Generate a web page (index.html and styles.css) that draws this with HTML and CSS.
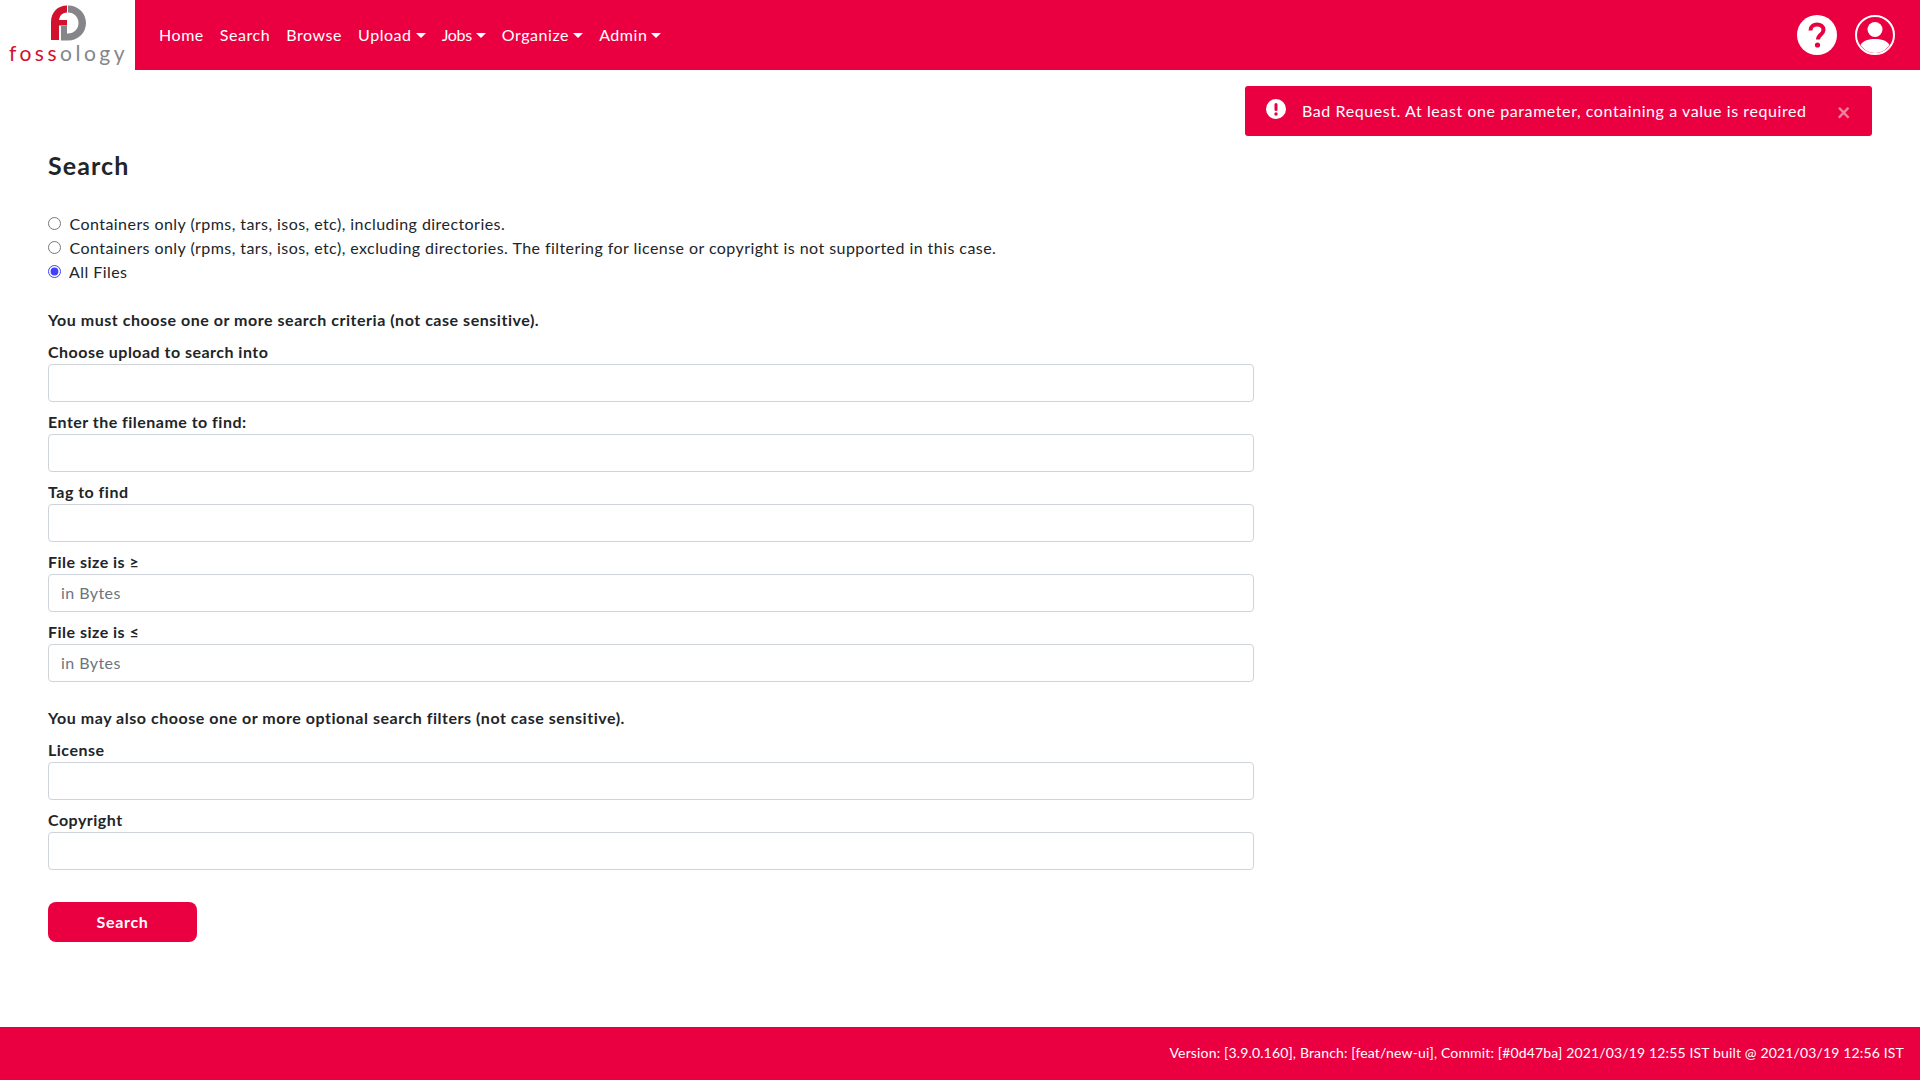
FILE: index.html

```html
<!DOCTYPE html>
<html lang="en">
<head>
  <meta charset="UTF-8">
  <title>Search</title>
  <link rel="stylesheet" href="styles.css">
</head>
<body>
  <nav class="navbar">
    <a class="brand" href="#">
      <svg class="brand-mark" width="36" height="36" viewBox="0 0 36 36">
        <path d="M0 35V17C0 7 7 .5 16 .5V7.500C11 7.500 8 11 8 17V35Z" fill="#d2112f"/>
        <rect x="7" y="15" width="9" height="5.500" fill="#d2112f"/>
        <path d="M17 .5C27 .5 35 8 35 18S27 35.500 17 35.500H10V28.500H17C23 28.500 27.500 24 27.500 18S23 7.500 17 7.500Z" fill="#85858a"/>
        <rect x="10" y="21" width="6" height="9" fill="#85858a"/>
      </svg>
      <span class="brand-name"><span class="brand-red">foss</span>ology</span>
    </a>
    <ul class="nav-list">
      <li><a href="#">Home</a></li>
      <li><a href="#">Search</a></li>
      <li><a href="#">Browse</a></li>
      <li><a class="caret" href="#">Upload</a></li>
      <li><a class="caret nav-tight" href="#">Jobs</a></li>
      <li><a class="caret" href="#">Organize</a></li>
      <li><a class="caret" href="#">Admin</a></li>
    </ul>
    <div class="nav-icons">
      <svg width="40" height="40" viewBox="0 0 40 40">
        <circle cx="20" cy="20" r="20" fill="#fff"/>
        <path d="M13.500 15.500C13.500 11.500 16.500 9.500 20 9.500S26.500 11.500 26.500 15C26.500 19.500 21 19.500 21 24.500" fill="none" stroke="#ea0040" stroke-width="4"/>
        <circle cx="20.500" cy="30" r="2.600" fill="#ea0040"/>
      </svg>
      <svg width="40" height="40" viewBox="0 0 40 40">
        <circle cx="20" cy="20" r="19" fill="none" stroke="#fff" stroke-width="2"/>
        <circle cx="20" cy="14.500" r="7.500" fill="#fff"/>
        <path d="M5.500 30C8 25.500 14 24 20 24S32 25.500 34.500 30C31 35 26 38 20 38S9 35 5.500 30Z" fill="#fff"/>
      </svg>
    </div>
  </nav>

  <div class="toast">
    <svg width="20" height="20" viewBox="0 0 20 20">
      <circle cx="10" cy="10" r="10" fill="#fff"/>
      <rect x="8.500" y="4" width="3" height="8" rx="1.500" fill="#ea0040"/>
      <circle cx="10" cy="15" r="1.700" fill="#ea0040"/>
    </svg>
    <span class="toast-text">Bad Request. At least one parameter, containing a value is required</span>
    <span class="toast-close">×</span>
  </div>

  <main class="content">
    <h1>Search</h1>
    <form class="search-form">
      <div class="radio-group">
        <label><input type="radio" name="scope"> Containers only (rpms, tars, isos, etc), including directories.</label>
        <label><input type="radio" name="scope"> Containers only (rpms, tars, isos, etc), excluding directories. The filtering for license or copyright is not supported in this case.</label>
        <label><input type="radio" name="scope" checked> All Files</label>
      </div>

      <p class="section-note">You must choose one or more search criteria (not case sensitive).</p>
      <div class="field"><label>Choose upload to search into</label><input type="text"></div>
      <div class="field"><label>Enter the filename to find:</label><input type="text"></div>
      <div class="field"><label>Tag to find</label><input type="text"></div>
      <div class="field"><label>File size is ≥</label><input type="text" placeholder="in Bytes"></div>
      <div class="field"><label>File size is ≤</label><input type="text" placeholder="in Bytes"></div>

      <p class="section-note">You may also choose one or more optional search filters (not case sensitive).</p>
      <div class="field"><label>License</label><input type="text"></div>
      <div class="field"><label>Copyright</label><input type="text"></div>

      <button class="search-btn" type="button">Search</button>
    </form>
  </main>

  <footer class="footer">Version: [3.9.0.160], Branch: [feat/new-ui], Commit: [#0d47ba] 2021/03/19 12:55 IST built @ 2021/03/19 12:56 IST</footer>
</body>
</html>
```

FILE: styles.css

```css
* { box-sizing: border-box; }
body {
  margin: 0;
  height: 1080px;
  display: flex;
  flex-direction: column;
  font-family: "Lato", "Noto Sans", sans-serif;
  font-size: 16px;
  line-height: 24px;
  letter-spacing: 0.44px;
  color: #212529;
  background: #fff;
  overflow: hidden;
}

/* navbar */
.navbar {
  display: flex;
  align-items: center;
  height: 70px;
  background: #ea0040;
  flex-shrink: 0;
}
.brand {
  width: 135px;
  height: 70px;
  background: #fff;
  display: flex;
  flex-direction: column;
  align-items: center;
  padding: 5px 0 0 2px;
  text-decoration: none;
}
.brand-mark { display: block; margin-left: 1px; }
.brand-name {
  font-size: 21px;
  line-height: 24px;
  letter-spacing: 3.5px;
  color: #85858a;
}
.brand-red { color: #d2112f; }
.nav-list {
  list-style: none;
  display: flex;
  gap: 16px;
  margin: 0;
  padding: 0 0 0 24px;
  letter-spacing: 0.55px;
}
.nav-list a { color: #fff; text-decoration: none; }
.nav-list .nav-tight { letter-spacing: -0.3px; }
.caret::after {
  content: "";
  display: inline-block;
  margin-left: 4px;
  vertical-align: 3px;
  border-top: 5px solid #fff;
  border-left: 5px solid transparent;
  border-right: 5px solid transparent;
}
.nav-icons {
  margin-left: auto;
  display: flex;
  gap: 18px;
  padding-right: 25px;
}
.nav-icons svg { display: block; }

/* toast */
.toast {
  position: absolute;
  top: 86px;
  left: 1245px;
  width: 627px;
  height: 50px;
  background: #ea0040;
  color: #fff;
  border-radius: 3px;
  display: flex;
  align-items: center;
  padding-left: 21px;
}
.toast svg { margin-top: -5px; flex-shrink: 0; }
.toast-text { margin-left: 16px; white-space: nowrap; letter-spacing: 0.58px; }
.toast-close {
  position: absolute;
  right: 21px;
  top: 14px;
  font-size: 24px;
  font-weight: 700;
  color: rgba(255, 255, 255, 0.5);
}

/* form */
.content {
  flex: 1;
  padding: 0 48px;
}
h1 {
  font-size: 25px;
  line-height: 30px;
  font-weight: 700;
  letter-spacing: 1.1px;
  margin: 80px 0 0;
}
.search-form { width: 1206px; }
.radio-group {
  display: flex;
  flex-direction: column;
  margin-top: 32px;
}
.radio-group input {
  margin: 0 4px 0 0;
  width: 13px;
  height: 13px;
  accent-color: #4040ff;
}
.section-note {
  font-weight: 700;
  letter-spacing: 0.53px;
  margin: 24px 0 8px;
}
.field { margin-bottom: 8px; }
.field label {
  display: block;
  font-weight: 700;
  letter-spacing: 0.48px;
  height: 24px;
}
.field input {
  display: block;
  width: 100%;
  height: 38px;
  border: 1px solid #ced4da;
  border-radius: 4px;
  padding: 4px 12px 6px;
  font: inherit;
  letter-spacing: inherit;
  color: #495057;
}
.field input::placeholder { color: #6c757d; opacity: 1; }
.search-btn {
  display: block;
  margin-top: 32px;
  width: 149px;
  height: 40px;
  background: #ea0040;
  border: 0;
  border-radius: 8px;
  color: #fff;
  font: 700 16px/24px "Lato", "Noto Sans", sans-serif;
  letter-spacing: 0.7px;
}

/* footer */
.footer {
  height: 53px;
  flex-shrink: 0;
  background: #ea0040;
  color: #fff;
  font-size: 14px;
  letter-spacing: 0.15px;
  display: flex;
  align-items: center;
  justify-content: flex-end;
  padding: 0 16px 2px 0;
}
```
